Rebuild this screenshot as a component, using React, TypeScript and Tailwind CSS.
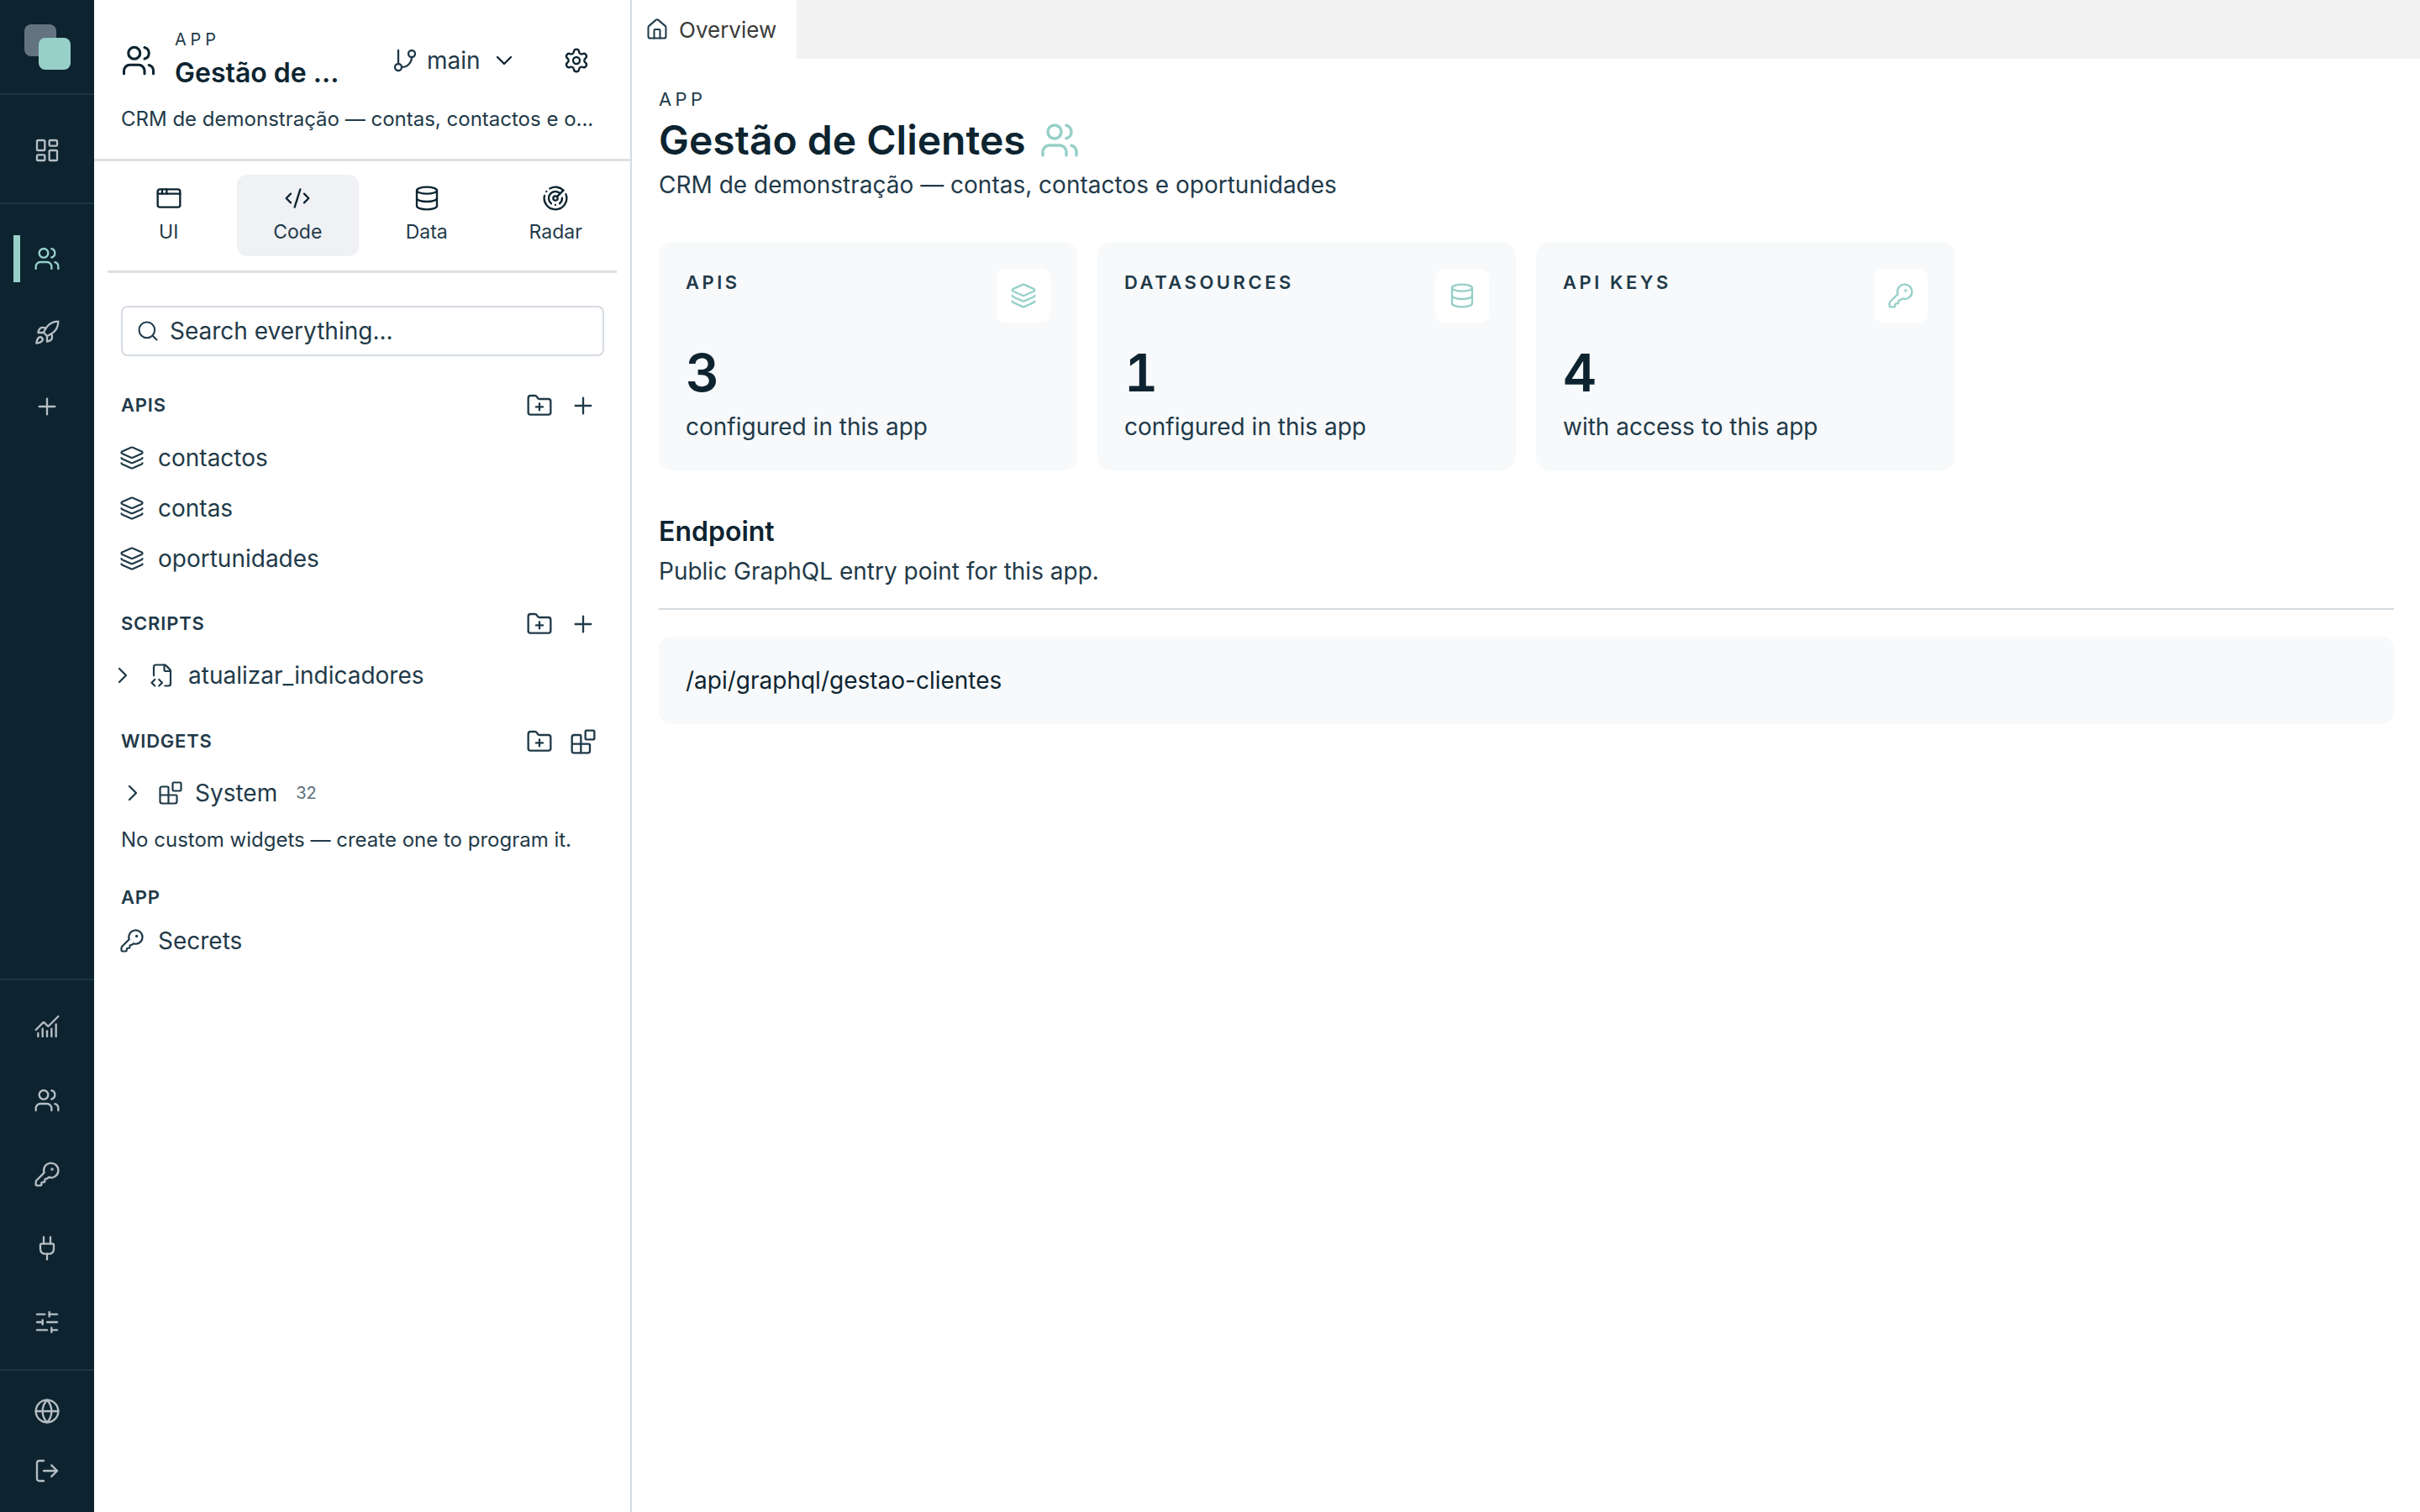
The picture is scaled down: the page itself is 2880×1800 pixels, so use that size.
import React from "react";
import {
  LayoutDashboard, Users, Rocket, Plus, ChartNoAxesCombined, KeyRound, Plug, SlidersHorizontal, Globe, LogOut,
  GitBranch, ChevronDown, ChevronRight, Settings, AppWindow, CodeXml, Database, Radar, Search, FolderPlus, Layers,
  FileCode2, Blocks, House,
} from "lucide-react";

const RailIcon = ({ Icon, active }: { Icon: any; active?: boolean }) => (
  <div className="relative h-[88px] flex items-center justify-center">
    {active && <span className="absolute left-[16px] top-[16px] w-[8px] h-[56px] bg-[#97d0c8]" />}
    <Icon size={32} strokeWidth={1.75} className={active ? "text-[#97d0c8]" : "text-[#b6bec3]"} />
  </div>
);

const SectionHead = ({ label, last: Last = Plus }: { label: string; last?: any }) => (
  <div className="h-[40px] flex items-center justify-between pl-[144px] pr-[40px] relative">
    <span className="text-[22px] font-semibold tracking-[0.8px] text-[#1f3a49] leading-none">{label}</span>
    <div className="flex items-center gap-[20px] mt-[2px] text-[#1f3a49]">
      <FolderPlus size={32} strokeWidth={1.75} />
      <Last size={32} strokeWidth={1.75} />
    </div>
  </div>
);

const Row = ({ Icon, label }: { Icon: any; label: string }) => (
  <div className="h-[60px] flex items-center gap-[16px] pl-[142px] text-[#1f3a49]">
    <Icon size={30} strokeWidth={1.75} />
    <span className="text-[28px]">{label}</span>
  </div>
);

const Tab = ({ Icon, label, active }: { Icon: any; label: string; active?: boolean }) => (
  <div className={`h-[97px] rounded-[12px] flex flex-col items-center justify-center gap-[10px] pb-[4px] text-[#0d2430] ${active ? "bg-[#f0f1f5]" : ""}`}>
    <Icon size={32} strokeWidth={1.75} />
    <span className="text-[23px] leading-[28px] text-[#1f3a49]">{label}</span>
  </div>
);

const Card = ({ label, value, sub, Icon }: { label: string; value: string; sub: string; Icon: any }) => (
  <div className="relative w-[498px] h-[272px] rounded-[16px] bg-[#f7f9fb] p-[32px]">
    <div className="text-[22px] font-semibold tracking-[0.16em] text-[#1f3a49] leading-[32px]">{label}</div>
    <div className="absolute right-[32px] top-[32px] w-[64px] h-[64px] rounded-[10px] bg-white flex items-center justify-center">
      <Icon size={32} strokeWidth={1.75} className="text-[#97d0c8]" />
    </div>
    <div className="mt-[52px] text-[62px] font-semibold leading-[80px] tabular-nums text-[#0d2430]">{value}</div>
    <div className="mt-[2px] text-[28px] leading-[44px] text-[#1f3a49]">{sub}</div>
  </div>
);

export default function App() {
  return (
    <div className="flex h-[1800px] w-[2880px] bg-white overflow-hidden" style={{ fontFamily: '"Inter", "Noto Sans", sans-serif' }}>
      <aside className="w-[112px] shrink-0 bg-[#0d2430] flex flex-col">
        <div className="h-[113px] shrink-0 relative border-b-[2px] border-[#1a3542]">
          <span className="absolute left-[29px] top-[29px] w-[38px] h-[38px] rounded-[8px] bg-[#637480]" />
          <span className="absolute left-[46px] top-[45px] w-[38px] h-[38px] rounded-[8px] bg-[#97d0c8]" />
        </div>
        <div className="h-[130px] shrink-0 flex flex-col justify-center pt-[4px] border-b-[2px] border-[#1a3542]">
          <RailIcon Icon={LayoutDashboard} />
        </div>
        <div className="pt-[21px] flex-1">
          <RailIcon Icon={Users} active />
          <RailIcon Icon={Rocket} />
          <RailIcon Icon={Plus} />
        </div>
        <div className="h-[465px] shrink-0 pt-[11px] border-t-[2px] border-[#1a3542]">
          <RailIcon Icon={ChartNoAxesCombined} />
          <RailIcon Icon={Users} />
          <RailIcon Icon={KeyRound} />
          <RailIcon Icon={Plug} />
          <RailIcon Icon={SlidersHorizontal} />
        </div>
        <div className="h-[170px] shrink-0 pt-[12px] border-t-[2px] border-[#1a3542] flex flex-col">
          <div className="h-[71px] flex items-center justify-center"><Globe size={32} strokeWidth={1.75} className="text-[#b6bec3]" /></div>
          <div className="h-[71px] flex items-center justify-center"><LogOut size={32} strokeWidth={1.75} className="text-[#b6bec3]" /></div>
        </div>
      </aside>

      <section className="w-[638px] shrink-0 border-r-[2px] border-[#d5dbe3] text-[#1f3a49] box-content">
        <div className="h-[192px] border-b-[3px] border-[#dcdfe3] pt-[30px] pl-[32px] pr-[20px]">
          <div className="h-[84px] flex items-center text-[#0d2430]">
            <Users size={42} strokeWidth={1.75} className="shrink-0" />
            <div className="ml-[22px] w-[240px]">
              <div className="text-[20px] tracking-[0.24em] leading-[30px] text-[#1f3a49]">APP</div>
              <div className="text-[32px] font-semibold leading-[50px] whitespace-nowrap">Gestão de ...</div>
            </div>
            <GitBranch size={32} strokeWidth={1.75} className="ml-[18px] text-[#1f3a49]" />
            <span className="ml-[10px] text-[28px] text-[#1f3a49]">main</span>
            <ChevronDown size={32} strokeWidth={1.75} className="ml-[12px]" />
            <Settings size={32} strokeWidth={1.75} className="ml-[54px]" />
          </div>
          <div className="mt-[12px] text-[24px] leading-[32px] whitespace-nowrap">CRM de demonstração — contas, contactos e o...</div>
        </div>

        <div className="mx-[16px] h-[133px] pt-[16px] border-b-[3px] border-[#dcdfe3] grid grid-cols-4 gap-[8px] items-start">
          <Tab Icon={AppWindow} label="UI" />
          <Tab Icon={CodeXml} label="Code" active />
          <Tab Icon={Database} label="Data" />
          <Tab Icon={Radar} label="Radar" />
        </div>

        <div className="mt-[39px] mx-[32px] w-[575px] h-[60px] rounded-[8px] border-[2px] border-[#d5dbe1] flex items-center pl-[16px] gap-[12px]">
          <Search size={28} strokeWidth={1.75} />
          <span className="text-[28px]">Search everything...</span>
        </div>

        <div className="-ml-[112px] mt-[38px]">
          <SectionHead label="APIS" />
          <div className="mt-[13px]">
            <Row Icon={Layers} label="contactos" />
            <Row Icon={Layers} label="contas" />
            <Row Icon={Layers} label="oportunidades" />
          </div>
          <div className="mt-[27px]"><SectionHead label="SCRIPTS" /></div>
          <div className="mt-[12px] h-[60px] flex items-center pl-[130px] text-[#1f3a49]">
            <ChevronRight size={32} strokeWidth={1.75} />
            <FileCode2 size={30} strokeWidth={1.75} className="ml-[16px]" />
            <span className="ml-[16px] text-[28px]">atualizar_indicadores</span>
          </div>
          <div className="mt-[28px]"><SectionHead label="WIDGETS" last={Blocks} /></div>
          <div className="mt-[12px] h-[60px] flex items-center pl-[142px] text-[#1f3a49]">
            <ChevronRight size={32} strokeWidth={1.75} />
            <Blocks size={30} strokeWidth={1.75} className="ml-[14px]" />
            <span className="ml-[14px] text-[28px]">System</span>
            <span className="ml-[22px] text-[20px] text-[#5c6f7b]">32</span>
          </div>
          <div className="h-[52px] flex items-center pl-[144px] text-[24px]">No custom widgets — create one to program it.</div>
          <div className="mt-[22px] h-[40px] flex items-center pl-[144px] text-[22px] font-semibold tracking-[0.8px]">APP</div>
          <div className="mt-[2px]"><Row Icon={KeyRound} label="Secrets" /></div>
        </div>
      </section>

      <main className="flex-1 min-w-0">
        <div className="h-[70px] bg-[#f2f2f2]">
          <div className="w-[196px] h-full bg-white flex items-center gap-[12px] pl-[16px]">
            <House size={28} strokeWidth={1.75} className="text-[#1f3a49]" />
            <span className="text-[26px] text-[#3a3a3a]">Overview</span>
          </div>
        </div>
        <div className="pl-[32px] pr-[31px]">
          <div className="mt-[32px] text-[22px] tracking-[0.2em] leading-[32px] text-[#1f3a49]">APP</div>
          <div className="mt-[1px] flex items-center gap-[16px]">
            <h1 className="text-[48px] font-semibold leading-[64px] text-[#0d2430]">Gestão de Clientes</h1>
            <Users size={48} strokeWidth={1.75} className="text-[#97d0c8]" />
          </div>
          <div className="-mt-[1px] text-[28px] leading-[44px] text-[#1f3a49]">CRM de demonstração — contas, contactos e oportunidades</div>
          <div className="mt-[46px] flex gap-[24px]">
            <Card label="APIS" value="3" sub="configured in this app" Icon={Layers} />
            <Card label="DATASOURCES" value="1" sub="configured in this app" Icon={Database} />
            <Card label="API KEYS" value="4" sub="with access to this app" Icon={KeyRound} />
          </div>
          <div className="mt-[50px] text-[32px] font-semibold leading-[46px] text-[#0d2430]">Endpoint</div>
          <div className="mt-[1px] text-[28px] leading-[46px] text-[#1f3a49]">Public GraphQL entry point for this app.</div>
          <div className="mt-[21px] h-[2px] bg-[#d5dbe0]" />
          <div className="mt-[32px] h-[104px] rounded-[14px] bg-[#f7f9fb] flex items-center pl-[32px] text-[28px] text-[#0d2430]">/api/graphql/gestao-clientes</div>
        </div>
      </main>
    </div>
  );
}
